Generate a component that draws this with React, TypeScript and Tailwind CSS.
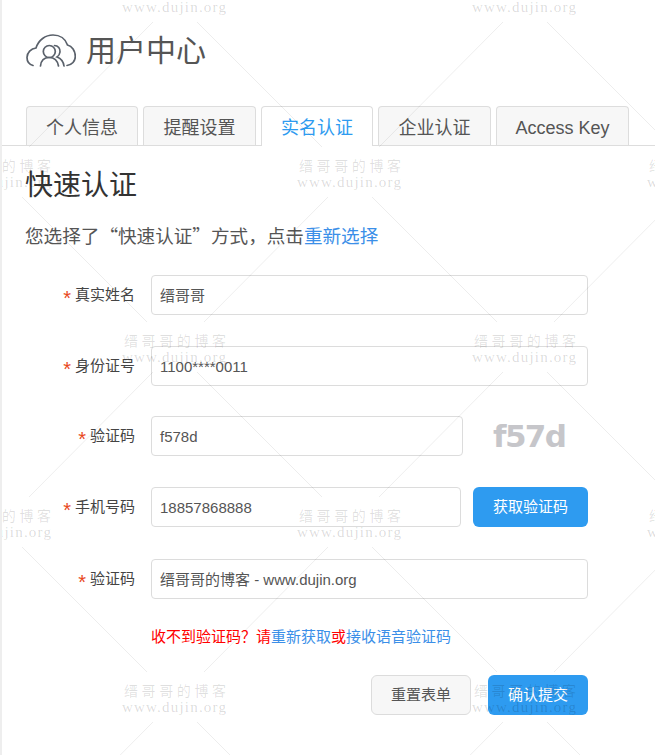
const FONT = "font-['Liberation_Sans','Noto_Sans_CJK_SC',sans-serif]";

const TABS = [
  { label: '个人信息', width: 'w-[112px]' },
  { label: '提醒设置', width: 'w-[113px]' },
  { label: '实名认证', width: 'w-[112px]', active: true },
  { label: '企业认证', width: 'w-[113px]' },
  { label: 'Access Key', width: 'w-[133px]' },
];

// tile centres of the repeating watermark
const MARKS = [
  { x: 175, y: 0 },
  { x: 525, y: 0 },
  { x: 0, y: 175 },
  { x: 350, y: 175 },
  { x: 700, y: 175 },
  { x: 175, y: 350 },
  { x: 525, y: 350 },
  { x: 0, y: 525 },
  { x: 350, y: 525 },
  { x: 700, y: 525 },
  { x: 175, y: 700 },
  { x: 525, y: 700 },
];

const CloudIcon = () => (
  <svg width="50" height="33" viewBox="0 0 50 33" fill="none" stroke="#5a616b" strokeWidth="1.7" strokeLinecap="round">
    <path d="M7 31.5C3.5 30.5 1 27.5 1 23.5C1 18.5 5 14.5 10 14C12.5 6 19.5 1 27 1C34 1 39.5 5 41.5 11C46 12 49.3 17 49.3 22.5C49.3 27 46 31 41 31.5" />
    <circle cx="23.3" cy="17.5" r="6" />
    <path d="M14.5 32C15 26.5 18.5 23.5 23.3 23.5C28 23.5 31.5 26.5 32.5 32" />
    <path d="M28.5 11.5C32 11.5 34.5 14.5 34 18C33.7 20.5 32.5 22 31 23C35 24.5 37.5 28 38 32" />
  </svg>
);

const Watermark = ({ x, y }: { x: number; y: number }) => (
  <div className="absolute h-0 w-0" style={{ left: x, top: y }}>
    <div className="absolute left-[-51px] top-[-18px] w-[104px] font-['Noto_Sans_CJK_SC',serif] text-[14px] leading-[16px] tracking-[3.6px] whitespace-nowrap text-black/12">
      缙哥哥的博客
    </div>
    <div className="absolute left-[-53px] top-[-1px] font-['Liberation_Serif',serif] text-[15px] leading-[16px] tracking-[1.2px] whitespace-nowrap text-black/15">
      www.dujin.org
    </div>
    <svg className="absolute left-[-160px] top-0 overflow-visible" width="320" height="160" fill="none" stroke="#000000" strokeOpacity="0.07" strokeWidth="1">
      <path d="M138 22L14 147" />
      <path d="M182 22L307 147" />
    </svg>
  </div>
);

const Field = ({
  label,
  value,
  width = 'w-[437px]',
  children,
}: {
  label: string;
  value: string;
  width?: string;
  children?: React.ReactNode;
}) => (
  <div className="flex h-10 items-center">
    <label className="flex w-[109px] items-center justify-end text-[15px] text-[#444]">
      <span className="mr-[4px] mt-[6px] text-[20px] leading-none text-[#e8481c]">*</span>
      {label}
    </label>
    <div className={`${width} ml-4 flex h-10 items-center rounded border border-[#dcdcdc] px-2 pt-[2px] text-[15px] text-[#555]`}>
      {value}
    </div>
    {children}
  </div>
);

export default function App() {
  return (
    <div className={`${FONT} relative h-[755px] w-[655px] overflow-hidden border-l-2 border-[#eeeeee] bg-white`}>
      <header className="flex h-[106px] items-start pl-6 pt-[34px]">
        <CloudIcon />
        <h1 className="ml-2.5 mt-[-1px] text-[30px] leading-9 font-normal text-[#555]">用户中心</h1>
      </header>

      <nav className="flex h-10 gap-[5px] border-b border-[#dddddd] pl-6">
        {TABS.map((tab) => (
          <div
            key={tab.label}
            className={
              tab.active
                ? `${tab.width} -mb-px flex h-10 items-center justify-center rounded-t border border-b-0 border-[#dddddd] bg-white pt-[3px] text-[18px] text-[#2e9bf0]`
                : `${tab.width} flex h-[39px] items-center justify-center rounded-t border border-b-0 border-[#dddddd] bg-[#f7f7f7] pt-[5px] text-[18px] text-[#555]`
            }>
            {tab.label}
          </div>
        ))}
      </nav>

      <div className="pl-[23px] pt-[22px]">
        <h2 className="text-[28px] leading-9 font-normal text-[#333]">快速认证</h2>
        <p className="mt-[17px] font-['Noto_Sans_CJK_SC',sans-serif] text-[18.6px] leading-7 text-[#555]">
          您选择了“快速认证”方式，点击<a className="text-[#3b8fe8]">重新选择</a>
        </p>
      </div>

      <form className="mt-[26px] flex flex-col pl-[24px]">
        <Field label="真实姓名" value="缙哥哥" />
        <div className="mt-[31px]">
          <Field label="身份证号" value="1100****0011" />
        </div>
        <div className="mt-[30px]">
          <Field label="验证码" value="f578d" width="w-[312px]">
            <span className="ml-[30px] font-['DejaVu_Sans',sans-serif] text-[31px] font-bold tracking-[-1.6px] text-[#c6c6ca]">f57d</span>
          </Field>
        </div>
        <div className="mt-[31px]">
          <Field label="手机号码" value="18857868888" width="w-[310px]">
            <button type="button" className="ml-3 h-10 w-[115px] rounded-md bg-[#2e9bf0] text-[15px] text-white">
              获取验证码
            </button>
          </Field>
        </div>
        <div className="mt-[32px]">
          <Field label="验证码" value="缙哥哥的博客 - www.dujin.org" />
        </div>
        <p className="mt-[27px] pl-[125px] text-[15px] leading-[22px] text-[#ff0000]">
          收不到验证码？请<a className="text-[#3b8fe8]">重新获取</a>或<a className="text-[#3b8fe8]">接收语音验证码</a>
        </p>
        <div className="mt-[27px] flex w-[562px] justify-end gap-[17px]">
          <button type="button" className="h-10 w-[100px] rounded-md border border-[#dcdcdc] bg-[#f7f7f7] text-[15px] text-[#555]">
            重置表单
          </button>
          <button type="button" className="h-10 w-[100px] rounded-md bg-[#2e9bf0] text-[15px] text-white">
            确认提交
          </button>
        </div>
      </form>

      <div className="pointer-events-none absolute inset-0 -left-0.5">
        {MARKS.map((m) => (
          <Watermark key={`${m.x}-${m.y}`} x={m.x} y={m.y} />
        ))}
      </div>
    </div>
  );
}
